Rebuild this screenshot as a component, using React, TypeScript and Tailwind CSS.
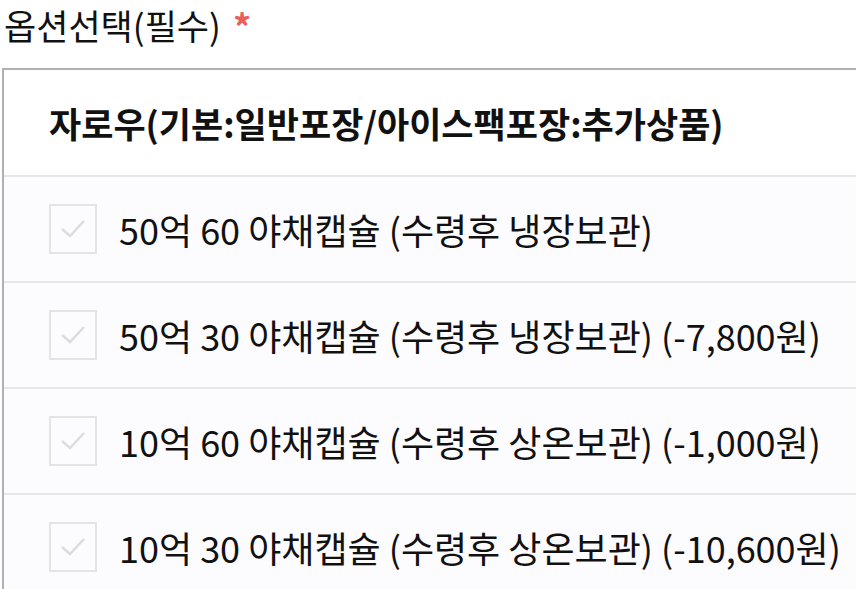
const options = [
  '50억 60 야채캡슐 (수령후 냉장보관)',
  '50억 30 야채캡슐 (수령후 냉장보관) (-7,800원)',
  '10억 60 야채캡슐 (수령후 상온보관) (-1,000원)',
  '10억 30 야채캡슐 (수령후 상온보관) (-10,600원)',
];

function CheckBox() {
  return (
    <div className="w-[48px] h-[50px] shrink-0 border-2 border-[#e4e4e6] flex items-center justify-center">
      <svg width="28" height="22" viewBox="0 0 28 22" fill="none">
        <path d="M3 11 L11 18 L25 3" stroke="#dcdcde" strokeWidth="2.5" />
      </svg>
    </div>
  );
}

export default function App() {
  return (
    <div className="w-[856px] h-[589px] overflow-hidden bg-white text-[#111] font-['Noto_Sans_CJK_KR','Noto_Sans',sans-serif]">
      <div className="h-[68px] pl-[4px] flex items-start">
        <span className="text-[35px] leading-[50px]">옵션선택(필수)</span>
        <span className="text-[#e8605a] ml-[12px] text-[36px] leading-[50px] font-bold">*</span>
      </div>
      <div className="ml-[2px] w-[900px] border-l-2 border-t-2 border-[#b0b0b2]">
        <div className="h-[105px] flex items-center pl-[45px] bg-white text-[35px] leading-none font-bold">
          자로우(기본:일반포장/아이스팩포장:추가상품)
        </div>
        {options.map((o) => (
          <div
            key={o}
            className="h-[106px] flex items-center gap-[22px] pl-[45px] bg-[#fcfbfd] border-t-2 border-[#e6e6e8]"
          >
            <CheckBox />
            <span className="text-[36px] leading-none">{o}</span>
          </div>
        ))}
      </div>
    </div>
  );
}
